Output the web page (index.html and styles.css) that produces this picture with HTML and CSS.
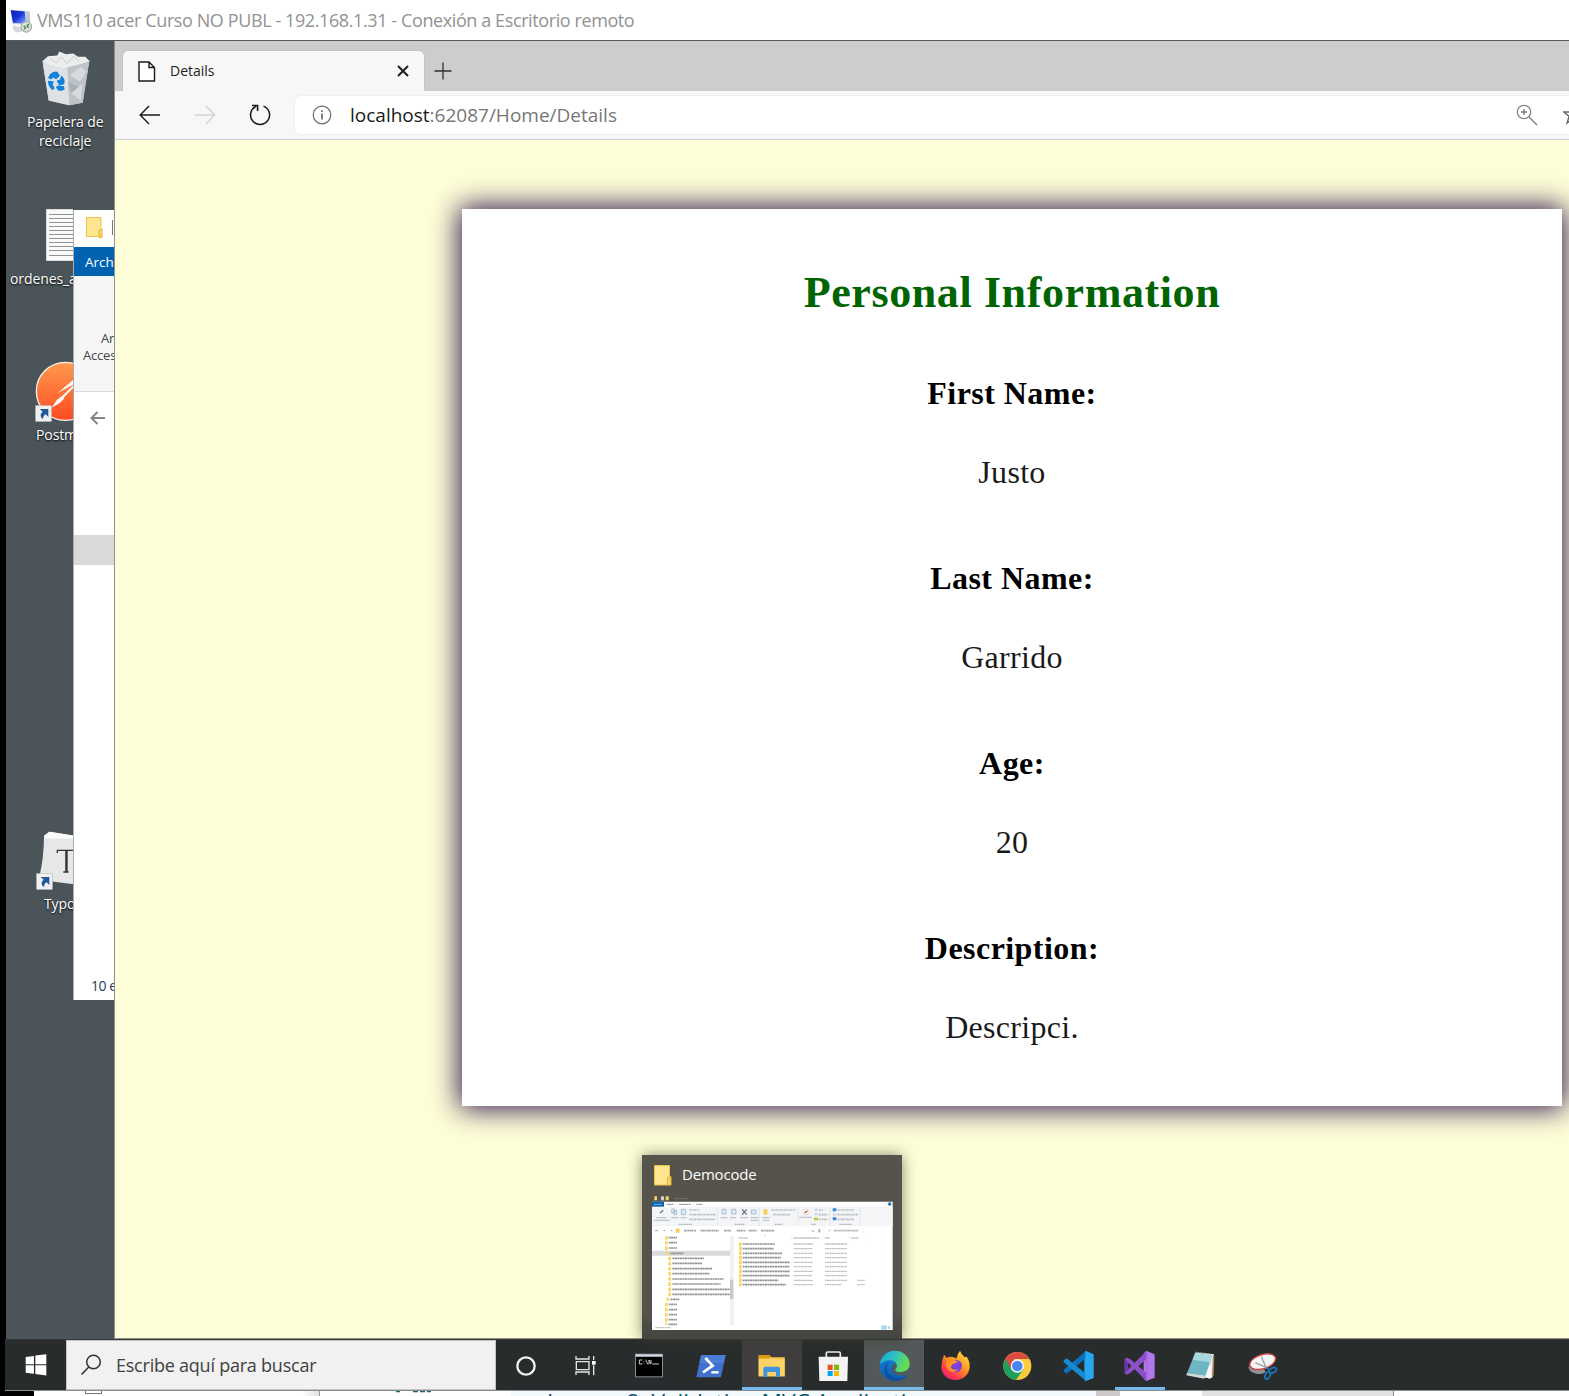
FILE: index.html
```html
<!DOCTYPE html>
<html lang="es">
<head>
<meta charset="utf-8">
<title>VMS110 acer Curso NO PUBL - 192.168.1.31 - Conexión a Escritorio remoto</title>
<link rel="stylesheet" href="styles.css">
</head>
<body>
<div class="screen">
  <header class="titlebar">
    <svg class="rdp-icon" viewBox="26 20 72 80">
      <defs><linearGradient id="scr" x1="0" y1="0" x2="1" y2="1"><stop offset="0" stop-color="#0d1f9c"/><stop offset=".5" stop-color="#1a35e0"/><stop offset="1" stop-color="#8fb6ff"/></linearGradient></defs>
      <path d="M38 74l30 8 4 10-24 4-10-8z" fill="#d5d8dc"/>
      <path d="M68 32l20 0 2 48-16 0z" fill="#c3c8ce"/>
      <path d="M30 27l46 4 4 42-44-2z" fill="#c9d3e4"/>
      <path d="M31 29l42 4 4 37-39-3z" fill="url(#scr)"/>
      <circle cx="78" cy="79" r="16" fill="#d9dcda" stroke="#9ba19c" stroke-width="3"/>
      <path d="M70 76l6 5-5 6M86 70l-6 6 5 6" fill="none" stroke="#2c8a35" stroke-width="3.500"/>
    </svg>
    <span class="titlebar-text">VMS110 acer Curso NO PUBL - 192.168.1.31 - Conexión a Escritorio remoto</span>
  </header>

  <main class="session">
    <section class="desktop">
      <svg class="d-icon bin" viewBox="120 150 156 170">
        <path d="M128 186l140-4-20 126-40 7-62-14z" fill="#c9ccd0"/>
        <path d="M128 186l74 10 6 119-62-14z" fill="#dfe1e3"/>
        <path d="M202 196l66-14-20 126-40 7z" fill="#bfc3c8"/>
        <path d="M210 225l32-25 18 15-20 30zM214 280l34-30-6 50z" fill="#d8dade"/>
        <path d="M205 245l30 15-22 18z" fill="#aab0b7"/>
        <path d="M126 184l18-16 28-2 6-12 20 8 22-2 14 10 22 0 13 13-40 12-40 9-34-8z" fill="#eceded"/>
        <path d="M150 176l20 12 14-18 18 20 20-22 14 16" fill="none" stroke="#cfd0d2" stroke-width="3"/>
        <path d="M150 222q10-10 22-7l8 12-12 10-8-5-8 6-8-5zM184 226q14 12 8 26l-14 4-8-14 10-4zM144 242l18 2-4 8 6 12-6 6q-14-8-14-28zM172 256l20 2 2 10q-10 6-20 2l-6-8z" fill="#0f82dc"/>
      </svg>
      <span class="d-label l-bin1">Papelera de</span>
      <span class="d-label l-bin2">reciclaje</span>

      <svg class="d-icon doc" viewBox="0 0 40 52">
        <path d="M0 0h40v52H0z" fill="#fafafa" stroke="#b8babb"/>
        <path d="M3 5.500h37M3 9.500h37M3 13.500h37M3 17.500h37M3 21.500h37M3 25.500h37M3 29.500h37M3 33.500h37M3 37.500h37M3 41.500h37M3 46.500h37" stroke="#8f9294" stroke-width="1.100"/>
      </svg>
      <span class="d-label l-doc">ordenes_a</span>

      <svg class="d-icon postman" viewBox="106 482 186 182">
        <defs><linearGradient id="pm" x1="0" y1="0" x2="0" y2="1"><stop offset="0" stop-color="#ff9a4d"/><stop offset="1" stop-color="#ff4a22"/></linearGradient></defs>
        <circle cx="197" cy="573" r="87" fill="url(#pm)" stroke="#f4f1ee" stroke-width="4"/>
        <path d="M156 622l16-24 16-12 6 8-14 14z" fill="#fff"/>
        <path d="M174 578l60-50 10 10-52 54-4-6 38-36z" fill="#fff"/>
        <rect x="108" y="616" width="47" height="47" fill="#f1f1f1" stroke="#b9bcc0" stroke-width="2"/>
        <path d="M120 626h26v24l-8-8q-8 4-8 15-14-12-1-23z" fill="#25579d"/>
      </svg>
      <span class="d-label l-postman">Postm</span>

      <svg class="d-icon typora" viewBox="106 94 150 180">
        <path d="M130 108l16-12 100 16v144l-26-2-60-8-44-14q14-60 14-124z" fill="#e6e7e8"/>
        <path d="M130 108l16-12 100 16v6l-110-2z" fill="#fbfbfb"/>
        <path d="M170 160v-8h54v8M196 152v64M188 217h16" fill="none" stroke="#333" stroke-width="4"/>
        <path d="M198 152v64" stroke="#333" stroke-width="6"/>
        <rect x="108" y="222" width="47" height="47" fill="#f1f1f1" stroke="#b9bcc0" stroke-width="2"/>
        <path d="M120 232h26v24l-8-8q-8 4-8 15-14-12-1-23z" fill="#25579d"/>
      </svg>
      <span class="d-label l-typora">Typo</span>

      <div class="explorer">
        <div class="ex-title">
          <svg width="17" height="21" viewBox="0 0 17 21"><path d="M.5.500h14.500v19H.5z" fill="#ffe58f" stroke="#e9c44c"/><path d="M13 13.500l3-1.500v8.500h-3z" fill="#fbd65c" stroke="#e0b73c"/></svg>
          <i class="ex-sep"></i>
        </div>
        <div class="ex-tab">Arch</div>
        <div class="ex-ribbon"><span class="ex-r1">Ar</span><span class="ex-r2">Acces</span></div>
        <div class="ex-nav">
          <svg width="16" height="14" viewBox="0 0 16 14"><path d="M15 7H2M7.500 1L1.500 7l6 6" fill="none" stroke="#858585" stroke-width="2"/></svg>
        </div>
        <div class="ex-selected"></div>
        <div class="ex-status">10 e</div>
      </div>
    </section>

    <section class="browser">
      <div class="tabstrip">
        <div class="tab">
          <svg class="file" width="18" height="21" viewBox="0 0 18 21"><path d="M1 1h10l5.500 5.500v13.500H1zM11 1v5.500h5.500" fill="#fff" stroke="#1b1b1b" stroke-width="1.400"/></svg>
          <span class="tab-title">Details</span>
          <svg class="close" width="12" height="12" viewBox="0 0 12 12"><path d="M1 1l10 10M11 1L1 11" stroke="#1d1d1d" stroke-width="2"/></svg>
        </div>
        <svg class="plus" width="18" height="18" viewBox="0 0 18 18"><path d="M9 .5v17M.5 9h17" stroke="#2e2e2e" stroke-width="1.300"/></svg>
      </div>
      <div class="toolbar">
        <svg class="nav-back" width="22" height="20" viewBox="0 0 22 20"><path d="M21 10H1.500M10 1L1.200 10 10 19" fill="none" stroke="#1b1b1b" stroke-width="1.400"/></svg>
        <svg class="nav-fwd" width="22" height="20" viewBox="0 0 22 20"><path d="M1 10h19.500M12 1l8.800 9-8.800 9" fill="none" stroke="#d3d3d3" stroke-width="1.400"/></svg>
        <svg class="nav-reload" width="22" height="22" viewBox="0 0 22 22"><path d="M14.500 2.100A9.500 9.500 0 1 1 7.200 2.300" fill="none" stroke="#1b1b1b" stroke-width="1.500"/><path d="M3 1.500h5.600v5.600" fill="none" stroke="#1b1b1b" stroke-width="1.600"/></svg>
        <div class="address">
          <svg class="info" width="20" height="20" viewBox="0 0 20 20"><circle cx="10" cy="10" r="8.800" fill="none" stroke="#6d6d6d" stroke-width="1.200"/><path d="M10 8.500v6M10 5.300v1.700" stroke="#555" stroke-width="1.500"/></svg>
          <span class="url"><b>localhost</b>:62087/Home/Details</span>
          <svg class="zoomico" width="22" height="22" viewBox="0 0 22 22"><circle cx="8" cy="8" r="6.700" fill="none" stroke="#858585" stroke-width="1.300"/><path d="M5 8h6M8 5v6" stroke="#777" stroke-width="1.300"/><path d="M13 13l8 8" stroke="#858585" stroke-width="1.500"/></svg>
          <svg class="star" width="20" height="20" viewBox="0 0 20 20"><path d="M10 1l2.600 6h6.600l-5.300 4.200 2 6.800-5.900-4-5.900 4 2-6.800L.8 7h6.600z" fill="none" stroke="#666" stroke-width="1.400"/></svg>
        </div>
      </div>
      <div class="page">
        <article class="card">
          <h1>Personal Information</h1>
          <dl>
            <div class="field"><dt>First Name:</dt><dd>Justo</dd></div>
            <div class="field"><dt>Last Name:</dt><dd>Garrido</dd></div>
            <div class="field"><dt>Age:</dt><dd>20</dd></div>
            <div class="field"><dt>Description:</dt><dd>Descripci.</dd></div>
          </dl>
        </article>
      </div>
    </section>

    <aside class="preview">
      <div class="preview-head">
        <svg width="18" height="21" viewBox="0 0 18 21"><path d="M.5.500h15v19.500H.5z" fill="#ffe58f" stroke="#e9c44c"/><path d="M13.500 12.500l3.500-1v8.500h-3.500z" fill="#fbd65c" stroke="#e0b73c"/></svg>
        <span>Democode</span>
      </div>
      <svg class="thumb" viewBox="66 150 722 405">
        <path d="M73 154h8v12h-8zM107 154h9v12h-9z" fill="#f5d36b"/><path d="M93 154h9v12h-9z" fill="#d9cfc8"/>
        <path d="M132 161h42" stroke="#777468" stroke-width="4" stroke-dasharray="5 2"/>
        <path d="M66 170h722v385H66z" fill="#fff"/>
        <path d="M66 170h36v15H66z" fill="#0a63b1"/><path d="M72 178h24" stroke="#7fb0dc" stroke-width="3"/>
        <path d="M110 178h20M148 178h34M199 178h18" stroke="#85888c" stroke-width="3" stroke-dasharray="6 1"/>
        <circle cx="779" cy="177" r="5" fill="#1a72c0"/><path d="M764 179l4-3 4 3" stroke="#999" fill="none"/>
        <path d="M66 186h722v58H66z" fill="#f4f5f7"/>
        <path d="M262 188v54M388 188v54M504 188v54M600 188v54M690 188v54" stroke="#dcdee1" stroke-width="2"/>
        <path d="M90 204l10-8M336 193l14 16M350 193l-14 16" stroke="#5f7388" stroke-width="4"/>
        <path d="M125 192h8v12h-8zM132 197h8v12h-8zM154 193h12v16h-12zM276 193h12v14h-12zM304 193h14v14h-14zM364 195h14v12h-14z" fill="#dce9f6" stroke="#8faac5" stroke-width="2"/>
        <path d="M401 192h11v17h-11z" fill="#f8d14e"/><path d="M521 193h13v16h-13z" fill="#fff" stroke="#b9aaa5"/><path d="M524 204l8-7" stroke="#d2532f" stroke-width="4"/>
        <path d="M554 190h8v8h-8zM554 203h8v8h-8z" fill="#c3d8ee"/><path d="M552 218h12v8h-12z" fill="#b7c944"/>
        <path d="M608 190h11v9h-11zM608 217h11v9h-11z" fill="#3689d8"/><path d="M608 204h11v9h-11z" fill="#d5e3ee"/>
        <path d="M178 195h30M178 209h80M178 223h78M424 195h72M430 209h52M566 195h14M566 209h28M566 223h27M622 195h52M622 209h62M622 223h50" stroke="#bdc0c5" stroke-width="5" stroke-dasharray="7 2 4 1"/>
        <path d="M80 218h30M72 226h48M124 218h22M152 218h17M272 218h20M300 218h18M330 218h24M362 218h24M362 226h22M397 218h22M400 226h18M508 217h38M146 238h40M314 238h30M434 238h24M544 238h14M628 238h38" stroke="#b6bac0" stroke-width="4" stroke-dasharray="5 1"/>
        <path d="M74 257h10M100 257h6M122 257h6" stroke="#adadad" stroke-width="3"/><path d="M137 251h12v12h-12z" fill="#f6cf55"/>
        <path d="M162 257h36M212 257h54M282 257h22M320 257h26M356 257h24M393 257h40" stroke="#a0a2a5" stroke-width="5" stroke-dasharray="6 1 3 1"/>
        <path d="M545 257l4 3 4-3M596 259l5-5" stroke="#777" fill="none" stroke-width="2"/><path d="M565 253h6v9h-6z" fill="#aaa"/><path d="M612 257h73" stroke="#bbb" stroke-width="5" stroke-dasharray="6 1"/>
        <path d="M582 248v18M698 248v18" stroke="#ddd"/>
        <path d="M66 317h234v15H66z" fill="#d9d9d9"/><path d="M300 272h11v268h-11z" fill="#f0f0f0"/><path d="M300 404h10v58h-10z" fill="#c9c9c9"/>
        <g stroke="#f9d766" stroke-width="8">
          <path d="M109 273v42M109 473v67" stroke-dasharray="11 4.500"/><path d="M113 319v10M113 458v10"/><path d="M119 335v120" stroke-dasharray="11 4.400"/>
          <path d="M331 292v132" stroke-dasharray="11 2.500"/>
        </g>
        <g stroke="#929598" stroke-width="5" stroke-dasharray="5 1 8 1">
          <path d="M116 278h25M116 293h25M116 309h25M120 325h40M127 340h95M127 355h90M127 371h119M127 386h112M127 402h154M127 417h145M127 433h173M127 448h173M121 463h27M116 478h25M116 494h25M116 509h25M116 524h25M116 538h25"/>
          <path d="M338 297h97M338 311h93M338 325h118M338 338h115M338 352h142M338 365h140M338 379h142M338 392h142M338 406h107M338 419h130"/>
        </g>
        <g stroke="#bfc1c4" stroke-width="4" stroke-dasharray="5 1 7 1">
          <path d="M326 279h28M490 279h78M584 279h16M664 279h22"/>
          <path d="M491 297h58M491 311h55M491 325h58M491 338h56M491 352h58M491 365h54M491 379h58M491 392h55M491 406h58M491 419h58"/>
          <path d="M585 297h66M585 311h66M585 325h66M585 338h66M585 352h66M585 365h66M585 379h66M585 392h66M585 406h66M585 419h50M682 406h22M682 419h22M76 548h46"/>
        </g>
        <path d="M484 272v14M578 272v14M658 272v14M710 272v14" stroke="#e3e3e3"/><path d="M402 272l3-2 3 2" stroke="#888" fill="none"/>
        <path d="M754 541h16v13h-16z" fill="#a6d8f2"/><path d="M773 544h8v7h-8z" fill="#b9d0e0"/>
      </svg>
    </aside>
  </main>

  <nav class="taskbar">
    <div class="start">
      <svg width="22" height="22" viewBox="76 89 64 63"><path d="M78 97l24-3v24H78zM106 93l32-4v29h-32zM78 121h24v25l-24-3zM106 121h32v30l-32-4z" fill="#fff"/></svg>
    </div>
    <div class="search">
      <svg width="22" height="22" viewBox="0 0 22 22"><circle cx="13.500" cy="8" r="6.800" fill="none" stroke="#333" stroke-width="1.500"/><path d="M8.800 13L1.500 20.500" stroke="#333" stroke-width="1.600"/></svg>
      <span>Escribe aquí para buscar</span>
    </div>
    <div class="apps">
      <svg class="app" viewBox="45 42 184 150"><circle cx="138" cy="120" r="26" fill="none" stroke="#f2f2f2" stroke-width="7"/></svg>
      <svg class="app" viewBox="229 42 184 150"><path d="M289 90v9h39v-9M289 147v-9h39v9M290 107h38v24h-38zM342 90v12M342 118v30" fill="none" stroke="#e6e6e6" stroke-width="4"/><path d="M337 105h11v11h-11z" fill="#fff"/></svg>
      <svg class="app" viewBox="413 42 184 150"><path d="M464 83h84v71h-84z" fill="#888d92"/><path d="M466 85h80v6h-80z" fill="#cfd8e2"/><path d="M467 93h78v58h-78z" fill="#000"/><path d="M486 102h-9v12h9M491 105v2M491 112v2M496 101l7 14M506 115v-13l6 12v-12M516 114h20" fill="none" stroke="#c9c9c9" stroke-width="3"/></svg>
      <svg class="app" viewBox="597 42 184 150"><path d="M663 87h74l-14 67h-74z" fill="#3f70cd"/><path d="M663 87h74l-5 24h-74z" fill="#5486dc" opacity=".6"/><path d="M676 96l22 23-29 20" fill="none" stroke="#fff" stroke-width="8"/><path d="M694 139h22" stroke="#fff" stroke-width="7"/></svg>
      <svg class="app app-hover" viewBox="781 42 184 150"><path d="M837 87h32l6 7h40v57h-78z" fill="#f9c64c"/><path d="M837 87h32l4 6-6 5h-30z" fill="#dd9a12"/><path d="M837 98h78v53h-78z" fill="#ffd268"/><path d="M851 153v-25q0-6 6-6h38q6 0 6 6v25h-12v-15h-26v15z" fill="#3b94dc"/></svg>
      <svg class="app" viewBox="965 42 184 150"><path d="M1038 97V82q0-4 4-4h34q4 0 4 4v15" fill="none" stroke="#eee" stroke-width="5"/><path d="M1015 92h88l-2 73h-84z" fill="#f4f4f4"/><path d="M1042 116h15v16h-15z" fill="#f04f23"/><path d="M1061 116h15v16h-15z" fill="#7fba00"/><path d="M1042 135h15v15h-15z" fill="#00a4ef"/><path d="M1061 135h15v15h-15z" fill="#ffb900"/></svg>
      <svg class="app app-active" viewBox="1149 42 184 150">
        <defs><linearGradient id="eg" x1="0" y1="0" x2="1" y2=".4"><stop offset="0" stop-color="#1aa0dd"/><stop offset=".5" stop-color="#2fc3c5"/><stop offset="1" stop-color="#67dd4b"/></linearGradient><linearGradient id="eb" x1="0" y1="0" x2="0" y2="1"><stop offset="0" stop-color="#138ad8"/><stop offset="1" stop-color="#0c5bb3"/></linearGradient></defs>
        <circle cx="1244" cy="120" r="45" fill="url(#eb)"/>
        <path d="M1199 118c2-26 22-44 45-44 26 0 45 18 45 40 0 16-12 24-28 24-12 0-19-5-14-10 8-9 2-24-14-25-16-2-31 5-34 15z" fill="url(#eg)"/>
        <path d="M1247 128c-5 6 2 11 14 11 12 0 22-5 28-12l3 4-7 12c-14 8-34 8-44-2-8-8-8-22 4-29 6 4 7 10 2 16z" fill="#53585a"/>
        <path d="M1231 104c-13 10-14 30-2 42 12 13 34 16 55 0-10 14-24 19-40 19-24-2-34-20-30-38 2-10 8-18 17-23z" fill="#10509c"/>
      </svg>
      <svg class="app" viewBox="73 42 184 150">
        <defs><linearGradient id="ff" x1="1" y1="0" x2=".2" y2="1"><stop offset="0" stop-color="#fff04a"/><stop offset=".45" stop-color="#ff9a1f"/><stop offset=".8" stop-color="#ff3750"/><stop offset="1" stop-color="#e91e78"/></linearGradient></defs>
        <path d="M133 86l8 10q8-5 18-3l12 4q2-14 10-23 4 12 14 20l6-2q10 14 9 31c-2 24-20 39-43 39s-42-17-42-40q1-20 8-36z" fill="url(#ff)"/>
        <circle cx="168" cy="120" r="19" fill="#7a42d8"/><path d="M133 88l8 9q14-6 25 6l10 4-9 5-8 2-6 9q4 10 15 8l7-3q-5 11-19 9-15-4-17-19-2-8 3-13-8-6-9-17z" fill="#ff9420"/>
      </svg>
      <svg class="app" viewBox="257 42 184 150"><circle cx="351" cy="120" r="42" fill="#fccb3c"/><path d="M315 98A42 42 0 0 0 347 162L370 130 351 120z" fill="#1f9f5b"/><path d="M315 98l18 32 18-10-10-21 46 0A42 42 0 0 0 315 98z" fill="#d94b40"/><circle cx="351" cy="120" r="20" fill="#fff"/><circle cx="351" cy="120" r="16" fill="#4a86ee"/></svg>
      <svg class="app" viewBox="441 42 184 150"><path d="M558 75l23 10v71l-23 9-5-4v-82z" fill="#27a7f2"/><path d="M558 75v22l-58 46-9-7v-5z" fill="#0a72bb"/><path d="M558 165v-22l-58-46-9 6v6z" fill="#168bd2"/><path d="M558 75l-2 2v86l2 2z" fill="#27a7f2"/></svg>
      <svg class="app app-run" viewBox="625 42 184 150"><path d="M740 75l25 10v70l-25 10-8-7 0-76z" fill="#b277ea"/><path d="M740 75v25l-49 41-10 5-6-4V98l6-3 10 4 49 41v25L684 109v22z" fill="#8a4fc9"/><path d="M675 98l9 10v24l-9 10z" fill="#6a35a6"/><path d="M740 75l4 0v90h-4z" fill="#a667e2"/></svg>
      <svg class="app" viewBox="809 42 184 150"><path d="M886 80l55 5-4 68-9 4-40-5z" fill="#e7ecee"/><path d="M938 88l4 2-2 60-5 2z" fill="#a77c4d"/><path d="M884 82l52 7-21 62-55-9z" fill="#6fb6c4"/><path d="M884 82l52 7-7 20-52-8z" fill="#a6d8de"/><path d="M915 151l14-38 6 42-9 3z" fill="#f6f8f9"/><path d="M860 141l55 8-3 9-54-10z" fill="#d4dadc"/><path d="M886 79l52 7" stroke="#cfd3d5" stroke-width="4" stroke-dasharray="3 3"/></svg>
      <svg class="app" viewBox="993 42 184 150"><path d="M1045 122q2 16 24 21 18 3 28-4l-6-14z" fill="#8f9293"/><ellipse cx="1088" cy="107" rx="40" ry="21" transform="rotate(-18 1088 107)" fill="#f5f5f5" stroke="#d94040" stroke-width="4"/><path d="M1066 110l36 16M1084 92l16 36" stroke="#9a9fa4" stroke-width="4"/><g fill="none" stroke="#1d77bd" stroke-width="5"><path d="M1100 124l8 8"/><ellipse cx="1118" cy="133" rx="12" ry="7" transform="rotate(-25 1118 133)"/><ellipse cx="1103" cy="148" rx="7" ry="12" transform="rotate(25 1103 148)"/></g></svg>
    </div>
  </nav>

  <footer class="behind">
    <div class="b-black"></div>
    <div class="b-left"><i class="b-box"></i></div>
    <div class="b-mid"><svg width="40" height="2" viewBox="0 0 40 2"><path d="M1 .5h4M18 .5h5M25 .5h5M32 .5h4" stroke="#1e6178" stroke-width="1.500"/></svg></div>
    <div class="b-lesson"><span>Lesson 2: Validating MVC Application</span></div>
    <div class="b-scroll"></div>
    <div class="b-gap"></div>
    <div class="b-gray"></div>
    <div class="b-right"></div>
  </footer>
</div>
</body>
</html>
```
FILE: styles.css
```css
* { box-sizing: border-box; }
body { margin: 0; background: #000; font-family: "Open Sans", "Noto Sans", sans-serif; }
svg { display: block; flex: none; }
.screen { width: 1569px; height: 1396px; display: flex; flex-direction: column; overflow: hidden; background: #000; }

.titlebar { height: 40px; margin-left: 6px; padding-left: 3px; display: flex; align-items: center; background: #fff; flex: none; }
.rdp-icon { width: 24px; height: 27px; }
.titlebar-text { margin-left: 4px; font-size: 18px; color: #929292; white-space: nowrap; letter-spacing: -0.4px; }

.session { position: relative; height: 1299px; margin-left: 6px; border-top: 1px solid #555a5c; display: flex; flex: none; background: #4b5459; }

/* desktop */
.desktop { position: relative; width: 109px; border-right: 1px solid #8d9187; overflow: hidden; flex: none; }
.d-icon { position: absolute; }
.d-label { position: absolute; font-size: 14px; line-height: 19px; color: #fff; white-space: nowrap; text-shadow: 0 1px 2px #000; letter-spacing: -0.1px; }
.bin { left: 34px; top: 9px; width: 52px; height: 57px; }
.l-bin1 { left: 21px; top: 71px; }
.l-bin2 { left: 33px; top: 90px; }
.doc { left: 40px; top: 168px; width: 40px; height: 52px; clip-path: inset(0 13px 0 0); }
.l-doc { left: 4px; top: 228px; }
.postman { left: 29px; top: 320px; width: 62px; height: 60.700px; }
.l-postman { left: 30px; top: 384px; }
.typora { left: 30px; top: 790px; width: 50px; height: 60px; }
.l-typora { left: 38px; top: 853px; }

.explorer { position: absolute; left: 67px; top: 169px; width: 42px; height: 790px; display: flex; flex-direction: column; background: #fff; border-left: 1px solid #a9adae; overflow: hidden; white-space: nowrap; }
.ex-title { height: 37px; padding: 7px 0 0 12px; display: flex; gap: 9px; flex: none; }
.ex-sep { width: 1px; height: 15px; margin-top: 3px; background: #777; }
.ex-tab { height: 29px; padding-left: 11px; background: #0063b1; color: #fff; font-size: 13.500px; line-height: 31px; flex: none; }
.ex-ribbon { height: 116px; background: #f5f6f7; border-bottom: 1px solid #d9dadc; display: flex; flex-direction: column; padding: 54px 0 0 9px; font-size: 13px; line-height: 17px; color: #444; flex: none; letter-spacing: -0.200px; }
.ex-r1 { padding-left: 18px; }
.ex-nav { height: 143px; padding: 19px 0 0 16px; flex: none; }
.ex-selected { height: 30px; background: #d9d9d9; flex: none; }
.ex-status { margin-top: auto; height: 26px; padding-left: 17px; font-size: 14px; line-height: 24px; color: #2b3a67; letter-spacing: -0.500px; }

/* browser */
.browser { flex: 1; min-width: 0; display: flex; flex-direction: column; border-bottom: 1px solid #8f917f; }
.tabstrip { height: 50px; background: #cdcdcd; padding: 10px 0 0 8px; display: flex; flex: none; }
.tab { width: 301px; height: 40px; border-radius: 5px 5px 0 0; background: #f7f7f7; display: flex; align-items: center; padding: 0 15px; box-shadow: 0 0 2px #aaa; }
.tab-title { margin: -2px 0 0 14px; flex: 1; font-size: 14px; color: #222; }
.plus { margin: 11px 0 0 10px; }
.toolbar { height: 49px; background: #f7f7f7; border-bottom: 1px solid #cfcfd2; display: flex; align-items: center; padding-left: 24px; flex: none; }
.nav-fwd { margin-left: 33px; }
.nav-reload { margin-left: 33px; }
.address { margin-left: 24px; flex: 1; min-width: 0; height: 38px; border-radius: 5px 0 0 5px; background: #fff; display: flex; align-items: center; padding-left: 17px; box-shadow: 0 0 2px #ddd; overflow: hidden; }
.url { margin-left: 18px; flex: 1; font-size: 19px; color: #777; white-space: nowrap; }
.url b { font-weight: 400; color: #1a1a1a; }
.zoomico { margin-right: 25px; }
.star { margin-right: -14px; }

.page { flex: 1; background: #fefed8; padding: 69px 0 0 347px; overflow: hidden; }
.card { width: 1100px; height: 897px; background: #fff; padding-top: 58px; box-shadow: 0 0 27px 2px #2a0a48; text-align: center; font-family: "Liberation Serif", "Times New Roman", serif; }
.card h1 { margin: 0; font-size: 44px; line-height: 52px; color: #006400; letter-spacing: 0.6px; }
.card dl { margin: 55px 0 0; display: grid; gap: 68px; }
.field { display: grid; gap: 41px; }
.field dt, .field dd { margin: 0; font-size: 32px; line-height: 38px; color: #1a1a1a; letter-spacing: 0.3px; }
.field dt { font-weight: 700; color: #000; letter-spacing: 0.45px; }

/* taskbar window preview, floating over the browser */
.preview { position: absolute; left: 636px; bottom: 0; width: 260px; height: 184px; background: linear-gradient(#55534b 85%, #444440); box-shadow: 0 0 14px rgba(60, 60, 40, .6); padding: 9px 10px 0; }
.preview-head { height: 22px; display: flex; align-items: center; gap: 10px; padding-left: 2px; margin-bottom: 9px; color: #fff; font-size: 15px; letter-spacing: -0.2px; }
.preview-head span { margin-top: -3px; }
.thumb { width: 240.700px; height: 135px; }

/* taskbar */
.taskbar { height: 52px; margin-left: 5px; display: flex; background: #282c2d; border-top: 1px solid #343838; border-bottom: 1px solid #8a8c8c; flex: none; }
.start { width: 61px; display: flex; align-items: center; justify-content: center; }
.search { width: 430px; background: #f1f1f1; border: 1px solid #c4c4c4; display: flex; align-items: center; padding-left: 13px; gap: 14px; font-size: 18px; color: #404040; letter-spacing: -0.230px; }
.apps { display: flex; margin-left: -1px; }
.app { width: 61.330px; height: 50px; }
.app-hover { background: linear-gradient(#403e3f 47px, #76b9f5 47px) right / 60px 100% no-repeat; }
.app-active { background: linear-gradient(#53585a 47px, #76b9ed 47px) right / 60px 100% no-repeat; }
.app-run { background: linear-gradient(#76b9ed, #76b9ed) 7px 100% / 50px 3px no-repeat; }

/* window peeking out below the session */
.behind { height: 5px; display: flex; background: #fff; overflow: hidden; flex: none; }
.b-black { width: 34px; background: #000; }
.b-left { width: 286px; border-right: 1px solid #999; padding-left: 51px; background: linear-gradient(90deg, #fff 94%, #e2e2e2); }
.b-box { display: block; width: 17px; height: 3px; border: 1px solid #777; border-top: 0; }
.b-mid { width: 191px; padding-left: 75px; }
.b-lesson { width: 585px; background: #f3fafe; padding-left: 36px; font-size: 22.700px; line-height: 21px; color: #07566b; white-space: nowrap; overflow: hidden; }
.b-scroll { width: 24px; background: #cdc9cb; }
.b-gap { width: 82px; }
.b-gray { width: 192px; background: #e3e1e2; border-right: 1px solid #888; }
.b-right { flex: 1; }
```
